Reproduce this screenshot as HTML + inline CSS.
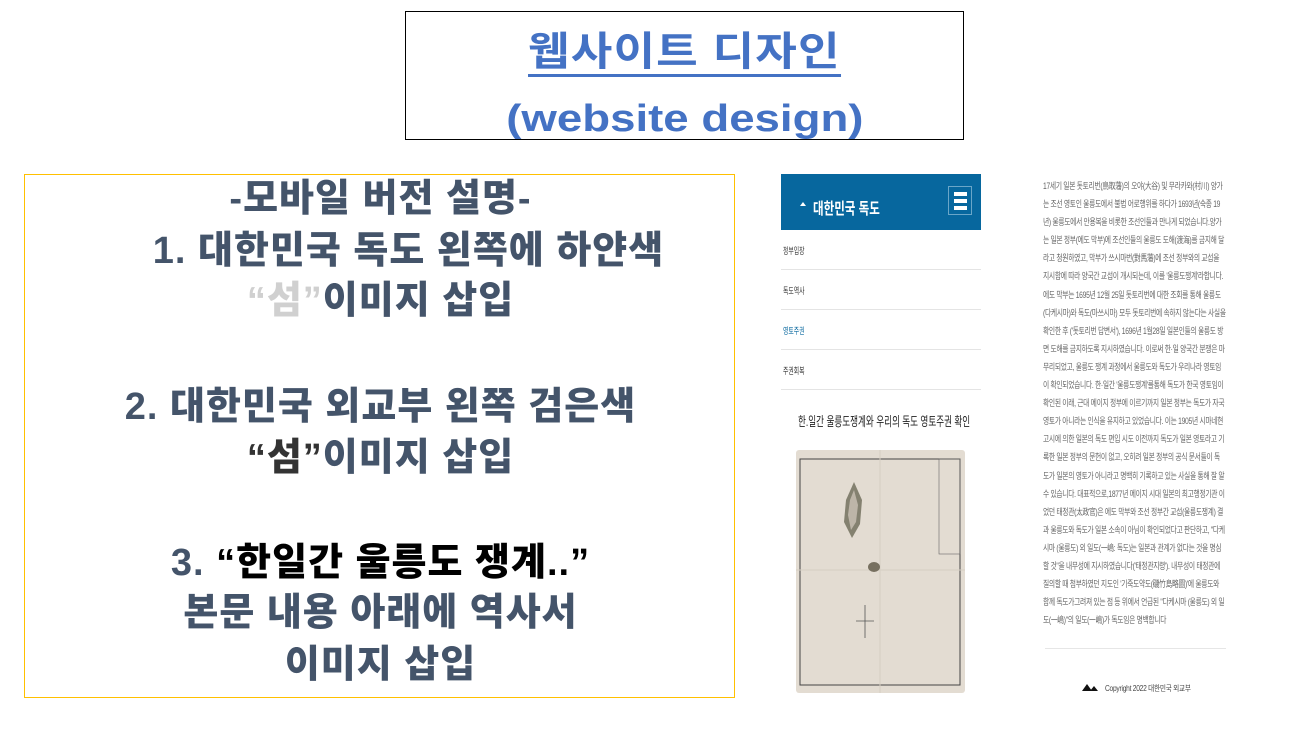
<!DOCTYPE html>
<html><head><meta charset="utf-8"><style>
*{margin:0;padding:0;box-sizing:border-box}
body{width:1306px;height:733px;background:#fff;position:relative;overflow:hidden;font-family:"Liberation Sans","Noto Sans CJK KR",sans-serif}
.tb{position:absolute;left:405px;top:11px;width:559px;height:129px;border:1px solid #000;text-align:center;color:#4472c4;font-weight:bold}
.tb .a{position:absolute;left:0;right:0;top:18px;font-size:40px;line-height:44px}
.tb .a span{display:inline-block;border-bottom:3px solid #4472c4;transform:scaleX(1.13);letter-spacing:1px}
.tb .b{position:absolute;left:0;right:0;top:84px;font-size:38px;line-height:46px}
.tb .b span{display:inline-block;transform:scaleX(1.2)}
.lb{position:absolute;left:24px;top:174px;width:711px;height:524px;border:1px solid #ffc000}
.l{position:absolute;left:0;width:711px;text-align:center;font-size:38px;font-weight:900;color:#44546a;line-height:44px;white-space:nowrap;letter-spacing:1px}
.nav{position:absolute;left:781px;top:174px;width:200px}
.hd{height:56px;background:#07679e;color:#fff;position:relative}
.hd .t{position:absolute;left:32px;top:21px;font-size:16px;font-weight:bold;transform:scaleX(0.72);transform-origin:left;white-space:nowrap}
.hd .tri{position:absolute;left:19px;top:28px;width:0;height:0;border-left:3px solid transparent;border-right:3px solid transparent;border-bottom:4px solid #fff}
.hd .m{position:absolute;left:167px;top:12px;width:24px;height:29px;border:1px solid #6aa6c8}
.hd .m i{position:absolute;left:5px;width:13px;height:4px;background:#fff}
.it{height:40px;border-bottom:1px solid #e4e4e4;font-size:9px;color:#333;padding:14px 0 0 2px}
.it span{display:inline-block;transform:scaleX(0.65);transform-origin:left}
.ht{position:absolute;left:798px;top:411px;font-size:13px;color:#222;transform:scaleX(0.66);transform-origin:left;white-space:nowrap}
.map{position:absolute;left:796px;top:450px;width:169px;height:243px;background:#e3dcd2;border-radius:3px}
.tx{position:absolute;left:1043px;top:177px;font-size:9px;color:#666;line-height:18.1px;white-space:nowrap;letter-spacing:-0.4px;transform:scaleX(0.75);transform-origin:left}
</style></head><body>
<div class="tb"><div class="a"><span>웹사이트 디자인</span></div><div class="b"><span>(website design)</span></div></div>
<div class="lb">
<div class="l" style="top:2px">-모바일 버전 설명-</div>
<div class="l" style="top:54px;left:28px">1. 대한민국 독도 왼쪽에 하얀색</div>
<div class="l" style="top:104px"><span style="color:#d0d0d0">“섬”</span>이미지 삽입</div>
<div class="l" style="top:210px">2. 대한민국 외교부 왼쪽 검은색</div>
<div class="l" style="top:261px"><span style="color:#333">“섬”</span>이미지 삽입</div>
<div class="l" style="top:366px">3. <span style="color:#000">“한일간 울릉도 쟁계..”</span></div>
<div class="l" style="top:416px">본문 내용 아래에 역사서</div>
<div class="l" style="top:468px">이미지 삽입</div>
</div>
<div class="nav">
<div class="hd"><div class="tri"></div><div class="t">대한민국 독도</div><div class="m"><i style="top:5px"></i><i style="top:12px"></i><i style="top:19px"></i></div></div>
<div class="it"><span>정부입장</span></div>
<div class="it"><span>독도역사</span></div>
<div class="it" style="color:#07679e"><span>영토주권</span></div>
<div class="it"><span>주권회복</span></div>
</div>
<div class="ht">한.일간 울릉도쟁계와 우리의 독도 영토주권 확인</div>
<div class="map">
<svg width="169" height="243" viewBox="0 0 169 243">
<rect x="4" y="9" width="160" height="226" fill="none" stroke="#444" stroke-width="1"/>
<rect x="143" y="9" width="21" height="95" fill="none" stroke="#666" stroke-width="0.6"/>
<path d="M84 0 V243 M0 120 H169" stroke="#d6cec3" stroke-width="1"/>
<path d="M58 32 L66 50 L64 74 L56 88 L48 72 L50 50 Z" fill="#6c6a58" opacity="0.8"/>
<path d="M58 40 L62 55 L60 72 L55 80 L52 65 L54 50Z" fill="#bdb5a8"/>
<ellipse cx="78" cy="117" rx="6" ry="5" fill="#777060"/>
<path d="M69 155 V188 M60 171 H78" stroke="#555" stroke-width="0.8"/>
</svg>
</div>
<div class="tx">
17세기 일본 돗토리번(鳥取藩)의 오야(大谷) 및 무라카와(村川) 양가<br>
는 조선 영토인 울릉도에서 불법 어로행위를 하다가 1693년(숙종 19<br>
년) 울릉도에서 안용복을 비롯한 조선인들과 만나게 되었습니다.양가<br>
는 일본 정부(에도 막부)에 조선인들의 울릉도 도해(渡海)를 금지해 달<br>
라고 청원하였고, 막부가 쓰시마번(對馬藩)에 조선 정부와의 교섭을<br>
지시함에 따라 양국간 교섭이 개시되는데, 이를 '울릉도쟁계'라합니다.<br>
에도 막부는 1695년 12월 25일 돗토리번에 대한 조회를 통해 울릉도<br>
(다케시마)와 독도(마쓰시마) 모두 돗토리번에 속하지 않는다는 사실을<br>
확인한 후 ('돗토리번 답변서'), 1696년 1월28일 일본인들의 울릉도 방<br>
면 도해를 금지하도록 지시하였습니다. 이로써 한·일 양국간 분쟁은 마<br>
무리되었고, 울릉도 쟁계 과정에서 울릉도와 독도가 우리나라 영토임<br>
이 확인되었습니다. 한·일간 '울릉도쟁계'를통해 독도가 한국 영토임이<br>
확인된 이래, 근대 메이지 정부에 이르기까지 일본 정부는 독도가 자국<br>
영토가 아니라는 인식을 유지하고 있었습니다. 이는 1905년 시마네현<br>
고시에 의한 일본의 독도 편입 시도 이전까지 독도가 일본 영토라고 기<br>
록한 일본 정부의 문헌이 없고, 오히려 일본 정부의 공식 문서들이 독<br>
도가 일본의 영토가 아니라고 명백히 기록하고 있는 사실을 통해 잘 알<br>
수 있습니다. 대표적으로,1877년 메이지 시대 일본의 최고행정기관 이<br>
었던 태정관(太政官)은 에도 막부와 조선 정부간 교섭(울릉도쟁계) 결<br>
과 울릉도와 독도가 일본 소속이 아님이 확인되었다고 판단하고, "다케<br>
시마 (울릉도) 외 일도(一嶋: 독도)는 일본과 관계가 없다는 것을 명심<br>
할 것"을 내무성에 지시하였습니다('태정관지령'). 내무성이 태정관에<br>
질의할 때 첨부하였던 지도인 '기죽도약도(磯竹島略圖)'에 울릉도와<br>
함께 독도가그려져 있는 점 등 위에서 언급된 "다케시마 (울릉도) 외 일<br>
도(一嶋)"의 일도(一嶋)가 독도임은 명백합니다
</div>
<div style="position:absolute;left:1045px;top:648px;width:181px;height:1px;background:#e6e6e6"></div>
<div style="position:absolute;left:1082px;top:684px;width:0;height:0;border-left:5px solid transparent;border-right:5px solid transparent;border-bottom:7px solid #111"></div>
<div style="position:absolute;left:1090px;top:686px;width:0;height:0;border-left:4px solid transparent;border-right:4px solid transparent;border-bottom:5px solid #111"></div>
<div style="position:absolute;left:1105px;top:683px;font-size:8px;color:#444;white-space:nowrap;letter-spacing:-0.3px;transform:scaleX(0.83);transform-origin:left">Copyright 2022 대한민국 외교부</div>
</body></html>
